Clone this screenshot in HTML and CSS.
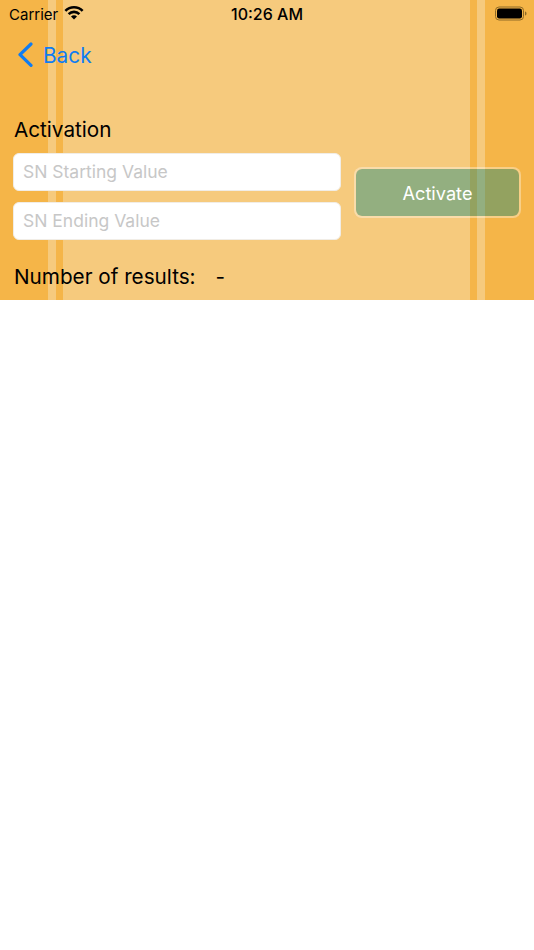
FILE: index.html
```html
<!DOCTYPE html>
<html lang="en">
<head>
<meta charset="utf-8">
<title>Activation</title>
<link rel="stylesheet" href="styles.css">
</head>
<body>
<div class="panel">
  <div class="status">
    <div class="status-left">
      <span class="carrier">Carrier</span>
      <svg class="wifi" width="20" height="15" viewBox="0 0 20 15"><path d="M1.370 5.870A12.200 12.200 0 0 1 18.630 5.870" fill="none" stroke="#000" stroke-width="2.600"/><path d="M4.630 9.130A7.600 7.600 0 0 1 15.370 9.130" fill="none" stroke="#000" stroke-width="2.600"/><path d="M10 14.500L7.030 11.530A4.200 4.200 0 0 1 12.970 11.530Z"/></svg>
    </div>
    <span class="time">10:26 AM</span>
    <svg class="battery" width="32" height="15" viewBox="0 0 32 15"><rect x="0.500" y="1" width="28" height="13" rx="3.500" fill="none" stroke="#8f6a26"/><rect x="2" y="2.500" width="25" height="10" rx="2.200" fill="#000"/><path d="M30 5.500c1 .3 1.500 1 1.500 2s-.5 1.700-1.500 2z" fill="#8f6a26"/></svg>
  </div>
  <a class="back" href="#">
    <svg class="chevron" width="16" height="26" viewBox="0 0 16 26"><path d="M14 2 L3 12.700 L14 23.400" fill="none" stroke="#0f7cf2" stroke-width="3.200" stroke-linecap="round" stroke-linejoin="round"/></svg>
    <span>Back</span>
  </a>
  <h1 class="title">Activation</h1>
  <div class="form">
    <div class="fields">
      <input class="field" type="text" placeholder="SN Starting Value">
      <input class="field" type="text" placeholder="SN Ending Value">
    </div>
    <button class="activate" type="button">Activate</button>
  </div>
  <div class="results">
    <span>Number of results:</span>
    <span class="count">-</span>
  </div>
</div>
</body>
</html>
```
FILE: styles.css
```css
* {
  box-sizing: border-box;
}
html, body {
  margin: 0;
  background: #fff;
}
body {
  width: 534px;
  height: 950px;
  overflow: hidden;
  font-family: Inter, "Liberation Sans", sans-serif;
  color: #000;
}
.panel {
  height: 300px;
  padding: 0 13px;
  background: linear-gradient(to right,
    #f5b548 0, #f5b548 48px,
    #f6ca7d 48px, #f6ca7d 56px,
    #f5b548 56px, #f5b548 63px,
    #f6ca7d 63px, #f6ca7d 470px,
    #f5b548 470px, #f5b548 477px,
    #f6ca7d 477px, #f6ca7d 485px,
    #f5b548 485px);
}
.status {
  position: relative;
  height: 28px;
  margin: 0 -13px;
  padding: 0 7px 0 9px;
  display: flex;
  align-items: center;
  justify-content: space-between;
  font-size: 15px;
}
.status-left {
  display: flex;
  align-items: center;
  gap: 6px;
}
.carrier {
  font-weight: 400;
}
.wifi {
  display: block;
  margin-top: -3px;
}
.time {
  position: absolute;
  left: 0;
  right: 0;
  text-align: center;
  font-size: 16px;
  font-weight: 500;
  pointer-events: none;
}
.battery {
  display: block;
  margin-top: -2px;
}
.back {
  display: flex;
  align-items: center;
  gap: 10px;
  height: 30px;
  margin-top: 12px;
  padding-left: 4px;
  color: #0f7cf2;
  font-size: 20.800px;
  text-decoration: none;
}
.title {
  margin: 46px 0 0;
  padding-left: 1px;
  font-size: 20.700px;
  font-weight: 400;
  line-height: 28px;
}
.form {
  display: flex;
  align-items: flex-start;
  gap: 13px;
  margin-top: 9px;
}
.fields {
  display: flex;
  flex-direction: column;
  gap: 11px;
  width: 328px;
}
.field {
  display: block;
  width: 100%;
  height: 38px;
  padding: 0 9px 2px;
  border: 1px solid #f1ede6;
  border-radius: 6px;
  background: #fff;
  font: 400 17.500px Inter, "Liberation Sans", sans-serif;
}
.field::placeholder {
  color: #c7c7c7;
  opacity: 1;
}
.activate {
  flex: 1;
  height: 51px;
  margin-top: 14px;
  padding: 0;
  border: 2px solid rgba(255, 255, 255, 0.35);
  border-radius: 8px;
  background-clip: padding-box;
  background-color: rgba(0, 135, 132, 0.4);
  color: #fff;
  font: 400 18.200px Inter, "Liberation Sans", sans-serif;
}
.results {
  display: flex;
  gap: 20px;
  margin-top: 23px;
  padding-left: 1px;
  font-size: 20.700px;
  line-height: 28px;
}
```
